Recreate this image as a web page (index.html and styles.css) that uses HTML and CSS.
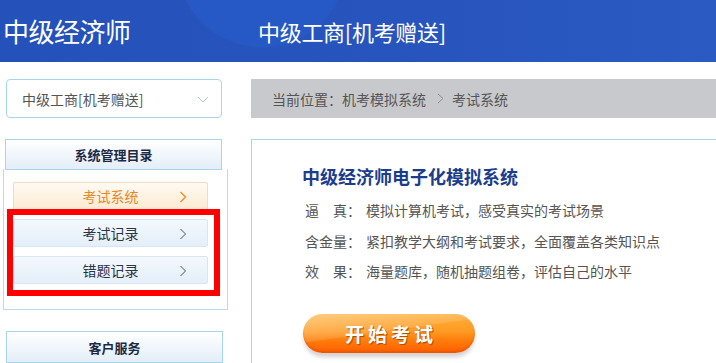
FILE: index.html
```html
<!DOCTYPE html>
<html lang="zh-CN">
<head>
<meta charset="utf-8">
<title>中级经济师</title>
<link rel="stylesheet" href="styles.css">
</head>
<body>
<header class="topbar">
  <div class="brand">中级经济师</div>
  <div class="course">中级工商[机考赠送]</div>
</header>
<div class="layout">
  <aside class="sidebar">
    <div class="select">
      <span>中级工商[机考赠送]</span>
      <svg class="select-caret" width="12" height="7" viewBox="0 0 12 7"><polyline points="1,1 6,6 11,1" fill="none" stroke="#b9c2cc" stroke-width="1"/></svg>
    </div>
    <div class="box-title">系统管理目录</div>
    <div class="menu">
      <a class="menu-item active"><span>考试系统</span>
        <svg class="chev" width="8" height="12" viewBox="0 0 8 12"><polyline points="1.5,1 6.5,6 1.5,11" fill="none" stroke="#e8922e" stroke-width="1.4"/></svg>
      </a>
      <a class="menu-item"><span>考试记录</span>
        <svg class="chev" width="8" height="12" viewBox="0 0 8 12"><polyline points="1.5,1 6.5,6 1.5,11" fill="none" stroke="#4a5566" stroke-width="1"/></svg>
      </a>
      <a class="menu-item"><span>错题记录</span>
        <svg class="chev" width="8" height="12" viewBox="0 0 8 12"><polyline points="1.5,1 6.5,6 1.5,11" fill="none" stroke="#4a5566" stroke-width="1"/></svg>
      </a>
      <div class="highlight"></div>
    </div>
    <div class="box-title service">客户服务</div>
  </aside>
  <main class="main">
    <div class="crumb">当前位置：机考模拟系统
      <svg class="crumb-chev" width="7" height="11" viewBox="0 0 7 11"><polyline points="1,1 6,5.5 1,10" fill="none" stroke="#8a8d93" stroke-width="1"/></svg>
      考试系统</div>
    <section class="panel">
      <h1 class="panel-title">中级经济师电子化模拟系统</h1>
      <ul class="features">
        <li><span class="label">逼　真：</span><span>模拟计算机考试，感受真实的考试场景</span></li>
        <li><span class="label">含金量：</span><span>紧扣教学大纲和考试要求，全面覆盖各类知识点</span></li>
        <li><span class="label">效　果：</span><span>海量题库，随机抽题组卷，评估自己的水平</span></li>
      </ul>
      <a class="start-btn">开始考试</a>
    </section>
  </main>
</div>
</body>
</html>
```

FILE: styles.css
```css
html, body {
  margin: 0;
  padding: 0;
  overflow: hidden;
  background: #fff;
}
body {
  font-family: "Noto Sans CJK SC", "Noto Sans", sans-serif;
  width: 716px;
  height: 363px;
}
.topbar {
  height: 62px;
  display: flex;
  align-items: center;
  padding-left: 3px;
  background:
    radial-gradient(circle at 262px -38px, #2759c6 0, #2759c6 84px, rgba(39,89,198,0) 86px),
    linear-gradient(90deg, #2452ba 0%, #2755bd 60%, #2a5ac2 100%);
  color: #fff;
}
.brand {
  font-size: 26px;
  line-height: 30px;
  width: 255px;
  letter-spacing: -0.5px;
}
.course {
  font-size: 22px;
  line-height: 26px;
  letter-spacing: -0.3px;
}
.layout {
  display: flex;
  padding-top: 17px;
  overflow: hidden;
  height: 284px;
}
.sidebar {
  width: 225px;
  margin-left: 3px;
  flex: none;
  display: flex;
  flex-direction: column;
}
.select {
  box-sizing: border-box;
  margin-left: 3px;
  width: 216px;
  height: 39px;
  border: 1px solid #a9d5ea;
  border-radius: 4px;
  display: flex;
  align-items: center;
  justify-content: space-between;
  padding: 0 12px 0 15px;
  font-size: 14px;
  color: #555;
}
.select-caret { margin-top: 1px; }
.box-title {
  box-sizing: border-box;
  margin: 21px 0 0 2px;
  width: 217px;
  height: 31px;
  border: 1px solid #a9d5ea;
  background: linear-gradient(#ffffff, #e3eef8);
  font-size: 13px;
  font-weight: bold;
  color: #1c2a45;
  display: flex;
  align-items: center;
  justify-content: center;
  position: relative;
  z-index: 1;
}
.box-title.service {
  margin-top: 21px;
  margin-left: 3px;
  height: 32px;
}
.menu {
  position: relative;
  box-sizing: border-box;
  width: 225px;
  margin-top: -1px;
  border: 1px solid #b9dcec;
  border-top: none;
  padding: 13px 0 25px 9px;
  display: flex;
  flex-direction: column;
  gap: 9px;
}
.menu-item {
  box-sizing: border-box;
  width: 195px;
  height: 28px;
  border: 1px solid #d8e6f1;
  border-radius: 2px;
  background: linear-gradient(#f3f8fd, #e4eff9);
  display: flex;
  align-items: center;
  justify-content: center;
  position: relative;
  font-size: 14px;
  color: #2b3346;
}
.menu-item.active {
  border-color: #f0dcc0;
  background: linear-gradient(#fffaf2, #fcebd3);
  color: #e3892a;
}
.menu-item .chev {
  position: absolute;
  right: 20px;
  top: 8px;
}
.highlight {
  position: absolute;
  left: 3px;
  top: 40px;
  width: 213px;
  height: 87px;
  box-sizing: border-box;
  border: 6px solid #ff0000;
  pointer-events: none;
}
.main {
  width: 500px;
  flex: none;
  margin-left: 23px;
}
.crumb {
  height: 39px;
  background: #c8c9cc;
  display: flex;
  align-items: center;
  padding-left: 21px;
  font-size: 14px;
  color: #555;
}
.crumb-chev {
  margin: 0 8px 0 11px;
}
.panel {
  box-sizing: border-box;
  margin-top: 21px;
  border: 1px solid #a9d5ea;
  border-bottom: none;
  height: 224px;
  padding: 24px 0 0 50px;
}
.panel-title {
  margin: 0;
  font-size: 18px;
  line-height: 24px;
  font-weight: bold;
  color: #1b3d8c;
}
.features {
  list-style: none;
  margin: 7px 0 0 3px;
  padding: 0;
  font-size: 14px;
  color: #555;
}
.features li {
  height: 30.5px;
  display: flex;
  align-items: center;
}
.features .label {
  width: 61px;
  flex: none;
}
.start-btn {
  display: flex;
  align-items: center;
  justify-content: center;
  margin-top: 27px;
  margin-left: 1px;
  width: 172px;
  height: 39px;
  border-radius: 20px;
  background:
    linear-gradient(172deg, rgba(255,255,255,0.35) 0%, rgba(255,255,255,0.12) 45%, rgba(255,255,255,0) 46%),
    linear-gradient(#ffb03c 0%, #ff9a22 45%, #ff7a0a 70%, #ff5e00 100%);
  box-shadow: 0 5px 4px -1px rgba(0,0,0,0.18), inset 0 -2px 2px rgba(210,70,0,0.4);
  color: #fff;
  font-size: 19px;
  font-weight: bold;
  letter-spacing: 4px;
  padding-left: 4px;
  box-sizing: border-box;
  text-shadow: 1px 1px 1px #a84a00;
}
```
